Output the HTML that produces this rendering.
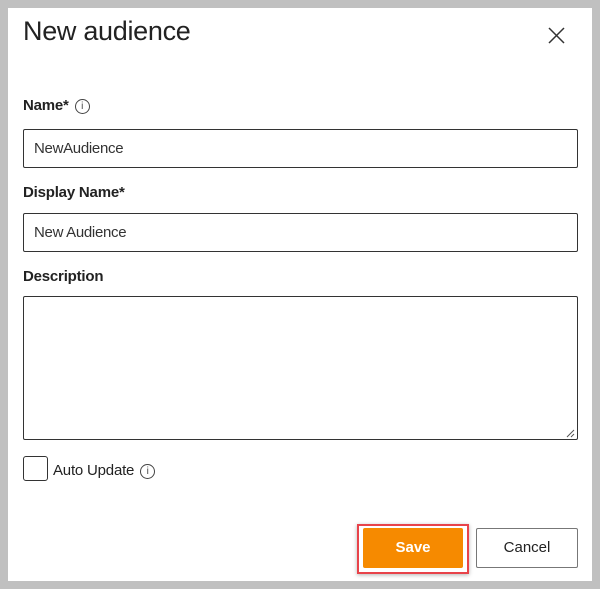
<!DOCTYPE html>
<html><head><style>
body{margin:0;width:600px;height:589px;background:#c0c0c0;font-family:"Liberation Sans",sans-serif;position:relative;overflow:hidden}
.box{position:absolute;left:8px;top:8px;width:584px;height:573px;background:#fff}
.a{position:absolute}
.lbl{font-weight:bold;font-size:15px;color:#222;letter-spacing:-0.2px}
.inp{border:1px solid #333;border-radius:2px;box-sizing:border-box;left:23px;width:555px;font-size:15px;color:#333;padding-left:10px;letter-spacing:-0.3px}
.info{display:inline-block;width:15px;height:15px;border:1px solid #444;border-radius:50%;box-sizing:border-box;font-size:10px;text-align:center;line-height:13px;font-weight:normal;vertical-align:1px;margin-left:6px;color:#444;letter-spacing:0}
</style></head><body>
<div class="box"></div>
<div class="a" style="left:23px;top:16px;font-size:27px;color:#222;letter-spacing:-0.3px">New audience</div>
<svg class="a" style="left:548px;top:27px" width="17" height="17"><path d="M1 1L16 16M16 1L1 16" stroke="#333" stroke-width="1.5"/></svg>
<div class="a lbl" style="left:23px;top:97px">Name*<span class="info">i</span></div>
<div class="a inp" style="top:129px;height:39px;line-height:37px">NewAudience</div>
<div class="a lbl" style="left:23px;top:184px">Display Name*</div>
<div class="a inp" style="top:213px;height:39px;line-height:37px">New Audience</div>
<div class="a lbl" style="left:23px;top:268px">Description</div>
<div class="a inp" style="top:296px;height:144px"></div>
<svg class="a" style="left:565px;top:428px" width="10" height="10"><path d="M9 2L2 9M9 6L6 9" stroke="#555" stroke-width="1"/></svg>
<div class="a" style="left:23px;top:456px;width:25px;height:25px;border:1px solid #333;border-radius:3px;box-sizing:border-box"></div>
<div class="a" style="left:53px;top:462px;font-size:15px;color:#222;letter-spacing:-0.2px">Auto Update<span class="info">i</span></div>
<div class="a" style="left:357px;top:524px;width:112px;height:50px;border:2px solid #e8434a;box-sizing:border-box;box-shadow:0 1px 4px rgba(0,0,0,.3)"></div>
<div class="a" style="left:363px;top:528px;width:100px;height:40px;background:#f68a00;border-radius:2px;color:#fff;font-weight:bold;font-size:15px;text-align:center;line-height:40px">Save</div>
<div class="a" style="left:476px;top:528px;width:102px;height:40px;border:1px solid #777;border-radius:2px;box-sizing:border-box;color:#222;font-size:15px;text-align:center;line-height:38px">Cancel</div>
</body></html>
